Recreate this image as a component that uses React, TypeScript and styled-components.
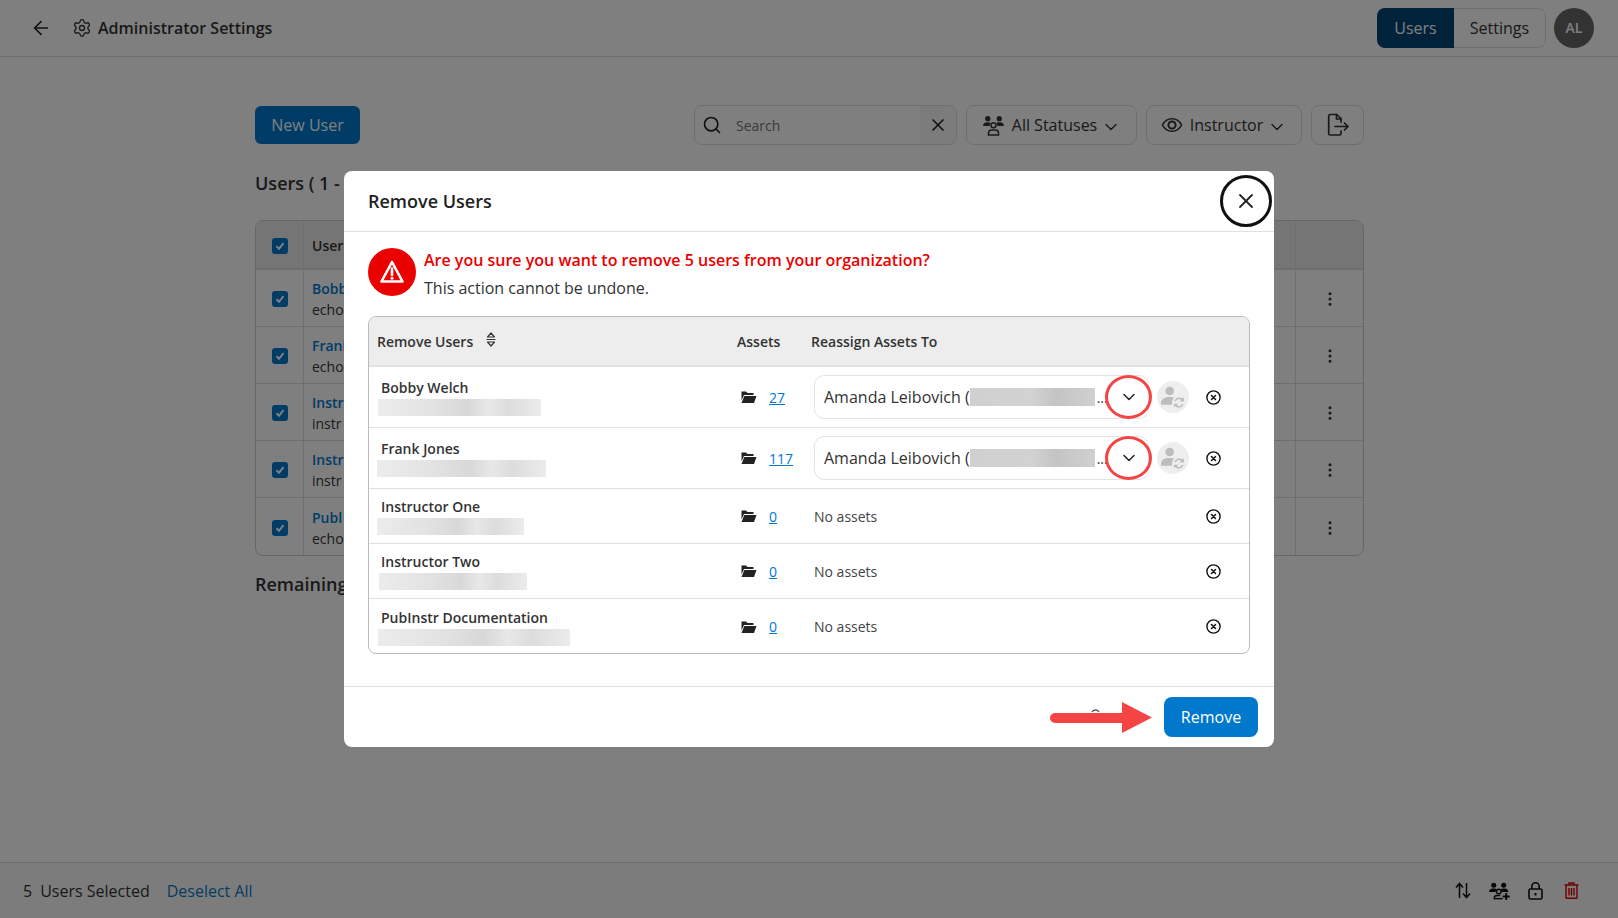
import React from 'react'
import styled, {createGlobalStyle} from 'styled-components'
import {ArrowLeft, ChevronDown, EllipsisVertical, Search, Settings, X} from 'lucide-react'

const GlobalStyle = createGlobalStyle`
  html, body {
    margin: 0;
    height: 100%;
    overflow: hidden;
    background: #fff;
    color: #333;
    font-family: "Open Sans", "Noto Sans", sans-serif;
  }
  * { box-sizing: border-box; }
`

const Page = styled.div`
  display: flex;
  flex-direction: column;
  height: 918px;
  width: 1618px;
`

const TopBar = styled.header`
  display: flex;
  align-items: center;
  height: 57px;
  padding: 0 24px 1px 30px;
  border-bottom: 1px solid #ddd;
`

const BackIcon = styled(ArrowLeft)`
  width: 22px;
  height: 22px;
  margin-right: 20px;
  color: #222;
  stroke-width: 1.7;
`

const PageTitle = styled.div`
  display: flex;
  align-items: center;
  gap: 6px;
  flex: 1;
  font-size: 16px;
  font-weight: 600;
  svg { width: 20px; height: 20px; stroke-width: 1.6; }
`

const Tabs = styled.div`
  display: flex;
  height: 40px;
  margin-right: 8px;
  border: 1px solid #ddd;
  border-radius: 8px;
`

const Tab = styled.div<{$active?: boolean}>`
  display: flex;
  align-items: center;
  justify-content: center;
  width: ${p => (p.$active ? '77px' : '91px')};
  margin: ${p => (p.$active ? '-1px 0 -1px -1px' : '0')};
  border-radius: ${p => (p.$active ? '8px 0 0 8px' : '0 8px 8px 0')};
  background: ${p => (p.$active ? '#004477' : 'transparent')};
  color: ${p => (p.$active ? '#fff' : '#333')};
  font-size: 16px;
`

const Avatar = styled.div`
  display: flex;
  align-items: center;
  justify-content: center;
  width: 40px;
  height: 40px;
  border-radius: 50%;
  background: #666;
  color: #fff;
  font-size: 14px;
  font-weight: 600;
`

const Main = styled.main`
  flex: 1;
  width: 1109px;
  margin-left: 255px;
  padding-top: 48px;
`

const Toolbar = styled.div`
  display: flex;
  align-items: center;
  gap: 9px;
  height: 40px;
`

const NewUserButton = styled.button`
  height: 38px;
  width: 105px;
  margin-right: auto;
  border: 0;
  border-radius: 6px;
  background: #0078cc;
  color: #fff;
  font: 16px "Open Sans", sans-serif;
`

const SearchBox = styled.div`
  display: flex;
  align-items: center;
  width: 263px;
  height: 40px;
  border: 1px solid #ddd;
  border-radius: 8px;
  overflow: hidden;
  color: #222;
`

const SearchIcon = styled.div`
  display: flex;
  align-items: center;
  justify-content: center;
  width: 33px;
  height: 100%;
  svg { width: 20px; height: 20px; }
`

const SearchField = styled.div`
  flex: 1;
  padding-left: 8px;
  font-size: 14px;
  color: #777;
`

const SearchClear = styled.div`
  display: flex;
  align-items: center;
  justify-content: center;
  width: 36px;
  height: 100%;
  background: #f8f8f8;
  svg { width: 20px; height: 20px; }
`

const FilterButton = styled.div<{$w: number}>`
  display: flex;
  align-items: center;
  justify-content: center;
  gap: 7px;
  width: ${p => p.$w}px;
  height: 40px;
  border: 1px solid #ddd;
  border-radius: 8px;
  font-size: 16px;
  color: #333;
  > svg:last-child:not(:first-child) { width: 20px; height: 20px; margin: 3px 0 0 -3px; stroke-width: 1.7; }
`

const SectionTitle = styled.h2<{$top: number}>`
  margin: ${p => p.$top}px 0 0;
  font-size: 18px;
  line-height: 24px;
  font-weight: 600;
  color: #333;
`

const UsersTable = styled.div`
  margin-top: 25px;
  border: 1px solid #ccc;
  border-radius: 8px;
  overflow: hidden;
`

const UsersHead = styled.div`
  display: grid;
  grid-template-columns: 48px 1fr 67px;
  height: 49px;
  background: #ebebeb;
  border-bottom: 2px solid #ddd;
  font-size: 14px;
  font-weight: 600;
`

const UsersRow = styled.div`
  display: grid;
  grid-template-columns: 48px 1fr 67px;
  height: 57px;
  border-bottom: 1px solid #ddd;
  font-size: 14px;
  &:last-child { border-bottom: 0; }
`

const UsersCell = styled.div<{$center?: boolean}>`
  display: flex;
  flex-direction: column;
  justify-content: center;
  align-items: ${p => (p.$center ? 'center' : 'flex-start')};
  padding-left: ${p => (p.$center ? '0' : '8px')};
  padding-top: 2px;
  border-right: 1px solid #ddd;
  line-height: 21px;
  &:last-child { border-right: 0; }
  svg { width: 18px; height: 18px; }
`

const UserLink = styled.div`
  color: #0078cc;
  font-weight: 600;
`

const CheckBox = styled.div`
  display: flex;
  align-items: center;
  justify-content: center;
  width: 16px;
  height: 16px;
  border-radius: 3px;
  background: #0078cc;
  svg { width: 10px; height: 10px; }
`

const BottomBar = styled.footer`
  display: flex;
  align-items: center;
  height: 56px;
  padding: 0 29px 0 23px;
  border-top: 1px solid #ddd;
  background: #f9f9f9;
  font-size: 16px;
`

const SelectedCount = styled.span`
  margin-right: 8px;
`

const DeselectLink = styled.span`
  margin-left: 17px;
  margin-right: auto;
  color: #0b78c4;
`

const BarIcon = styled.span<{$danger?: boolean}>`
  display: flex;
  justify-content: center;
  width: 36px;
  color: ${p => (p.$danger ? '#e00000' : '#111')};
`

const Overlay = styled.div`
  position: fixed;
  inset: 0;
  display: flex;
  align-items: center;
  justify-content: center;
  background: rgba(0, 0, 0, 0.5);
`

const Modal = styled.section`
  position: relative;
  width: 930px;
  height: 576px;
  background: #fff;
  border-radius: 8px;
`

const ModalHeader = styled.div`
  display: flex;
  align-items: center;
  height: 61px;
  padding: 0 24px 1px;
  border-bottom: 1px solid #e0e0e0;
  font-size: 18px;
  font-weight: 600;
  color: #222;
`

const CloseRing = styled.div`
  position: absolute;
  top: 4px;
  right: 2px;
  display: flex;
  align-items: center;
  justify-content: center;
  width: 52px;
  height: 52px;
  border: 3px solid #111;
  border-radius: 50%;
  background: #fff;
  color: #222;
  svg { width: 24px; height: 24px; stroke-width: 1.8; }
`

const ModalBody = styled.div`
  padding: 16px 24px 0;
`

const Alert = styled.div`
  display: flex;
  gap: 8px;
  height: 51px;
`

const AlertBadge = styled.div`
  display: flex;
  align-items: center;
  justify-content: center;
  flex: none;
  width: 48px;
  height: 48px;
  border-radius: 50%;
  background: #eb0000;
  svg { width: 26px; height: 26px; margin-top: -1px; }
`

const AlertText = styled.div`
  margin-top: -2px;
  font-size: 16px;
  line-height: 28px;
  color: #333;
`

const AlertTitle = styled.div`
  font-weight: 600;
  color: #eb0000;
`

const RemoveTable = styled.div`
  margin-top: 17px;
  height: 338px;
  border: 1px solid #bbb;
  border-radius: 8px;
  overflow: hidden;
`

const rowColumns = '368px 74px 1fr'

const RemoveHead = styled.div`
  display: grid;
  grid-template-columns: ${rowColumns};
  align-items: center;
  height: 50px;
  background: #ededed;
  border-bottom: 2px solid #e2e2e2;
  font-size: 14px;
  font-weight: 600;
  color: #333;
`

const HeadName = styled.div`
  display: flex;
  align-items: center;
  gap: 13px;
  padding-left: 8px;
  svg { width: 10px; height: 15px; margin-top: -3px; }
`

const RemoveRow = styled.div<{$tall?: boolean}>`
  display: grid;
  grid-template-columns: ${rowColumns};
  align-items: center;
  height: ${p => (p.$tall ? 61 : 55)}px;
  border-bottom: 1px solid #e0e0e0;
  &:last-child { border-bottom: 0; }
`

const NameCell = styled.div`
  display: flex;
  flex-direction: column;
  align-items: flex-start;
  padding-left: 12px;
  font-size: 14px;
  font-weight: 600;
  line-height: 19px;
  color: #333;
`

const Blur = styled.div<{$w: number; $x: number}>`
  width: ${p => p.$w}px;
  height: 17px;
  margin-top: 2px;
  margin-left: ${p => p.$x}px;
  background: linear-gradient(90deg, #ececec, #e2e2e2 35%, #d8d8d8 55%, #e8e8e8 68%, #dcdcdc 80%, #ececec);
`

const AssetCell = styled.div`
  display: flex;
  align-items: center;
  gap: 12px;
  padding-left: 3px;
  font-size: 14px;
`

const AssetLink = styled.a`
  color: #0078d0;
  text-decoration: underline;
`

const ReassignCell = styled.div`
  display: flex;
  align-items: center;
  padding: 0 28.5px 0 3px;
  font-size: 14px;
  color: #444;
`

const NoAssets = styled.div`
  flex: 1;
`

const AssetSelect = styled.div`
  position: relative;
  display: flex;
  align-items: center;
  width: 335px;
  height: 44px;
  padding-left: 9px;
  border: 1px solid #e2e2e2;
  border-radius: 10px;
  font-size: 16px;
  color: #333;
  white-space: nowrap;
`

const SelectBlur = styled.div`
  width: 125px;
  height: 18px;
  background: linear-gradient(90deg, #d0d0d0, #d2d2d2 50%, #c4c4c4 68%, #d0d0d0);
`

const Ellipsis = styled.span`
  margin-left: 2px;
  font-size: 14px;
`

const Chevron = styled(ChevronDown)`
  position: absolute;
  right: 9px;
  width: 20px;
  height: 20px;
  color: #222;
  stroke-width: 1.8;
`

const AnnotationRing = styled.div`
  position: absolute;
  top: -1px;
  right: -4px;
  width: 47px;
  height: 44px;
  border: 3px solid #f44444;
  border-radius: 50%;
`

const ReassignButton = styled.div`
  display: flex;
  align-items: center;
  justify-content: center;
  flex: none;
  width: 32px;
  height: 32px;
  margin-left: 8px;
  border-radius: 50%;
  background: #eee;
`

const RemoveIcon = styled.div`
  display: flex;
  margin-left: auto;
  color: #111;
`

const ModalFooter = styled.div`
  position: absolute;
  left: 0;
  right: 0;
  bottom: 0;
  display: flex;
  align-items: center;
  justify-content: flex-end;
  height: 61px;
  padding: 0 16px;
  border-top: 1px solid #e0e0e0;
`

const RemoveButton = styled.button`
  width: 94px;
  height: 40px;
  border: 0;
  border-radius: 8px;
  background: #0078cc;
  color: #fff;
  font: 16px "Open Sans", sans-serif;
`

const ArrowNote = styled.svg`
  position: absolute;
  left: 706px;
  top: 15px;
`

const GroupIcon = ({size = 23}: {size?: number}) => (
    <svg width={size} height={size} viewBox="0 0 22 22" fill="currentColor">
        <circle cx="5.500" cy="4.500" r="2.500"/>
        <circle cx="16.500" cy="4.500" r="2.500"/>
        <path d="M1 11.500c0-2 1.600-3.600 3.600-3.600h1.800c.8 0 1.500.3 2 .7-.7.7-1.100 1.800-1.100 2.900H1zM21 11.500c0-2-1.600-3.600-3.600-3.600h-1.800c-.8 0-1.500.3-2 .7.7.7 1.100 1.800 1.100 2.900H21z"/>
        <circle cx="11" cy="10.800" r="2.400" fill="none" stroke="currentColor" strokeWidth="1.400"/>
        <path d="M6.200 20v-1.600c0-1.800 1.400-3 3-3h3.600c1.600 0 3 1.200 3 3V20H6.200z" fill="none" stroke="currentColor" strokeWidth="1.400"/>
    </svg>
)

const GroupAddIcon = () => (
    <svg width="21" height="18" viewBox="0 0 20 17" fill="currentColor">
        <circle cx="4.500" cy="3" r="2.400"/>
        <circle cx="14" cy="3" r="2.400"/>
        <path d="M0 9.500c0-2 1.500-3.400 3.400-3.400h2c.7 0 1.400.3 1.900.7-.6.7-1 1.700-1 2.700H0zM18.500 9.500c0-2-1.500-3.400-3.400-3.400h-2c-.7 0-1.400.3-1.900.7.6.7 1 1.700 1 2.700h6.300z"/>
        <circle cx="9.300" cy="9" r="2.200" fill="none" stroke="currentColor" strokeWidth="1.400"/>
        <path d="M5 16.300v-1c0-1.500 1.200-2.600 2.700-2.600h3" fill="none" stroke="currentColor" strokeWidth="1.400"/>
        <path d="M5 15.800h8" stroke="currentColor" strokeWidth="1.400"/>
        <path d="M15.500 10.500h1.800v2.300h2.500v1.800h-2.500V17h-1.800v-2.400H13v-1.800h2.500z"/>
    </svg>
)

const EyeIcon = () => (
    <svg width="22" height="22" viewBox="0 0 22 22" fill="none" stroke="currentColor" strokeWidth="1.600">
        <path d="M1.500 11C3.500 6.800 7 4.800 11 4.800s7.500 2 9.500 6.200c-2 4.200-5.500 6.200-9.500 6.200S3.500 15.200 1.500 11z"/>
        <circle cx="11" cy="11" r="3.600" strokeWidth="2"/>
    </svg>
)

const ExportIcon = () => (
    <svg width="22" height="24" viewBox="0 0 22 24" fill="none" stroke="currentColor" strokeWidth="1.700" strokeLinejoin="round" strokeLinecap="round">
        <path d="M14 9V5.500L9.800 1.500H3.200C2.300 1.500 1.700 2.100 1.700 3v17.500c0 .9.600 1.500 1.500 1.500h9.300c.9 0 1.500-.6 1.500-1.500V18"/>
        <path d="M9.500 1.500V6h4.500M8 13.500h13M17.500 10l3.500 3.500-3.500 3.500"/>
    </svg>
)

const SortIcon = () => (
    <svg viewBox="0 0 10 15" fill="none" stroke="#333" strokeWidth="1.200" strokeLinejoin="round">
        <path d="M5 1 1.500 5h7z"/>
        <path d="M5 14 1.500 10h7z"/>
        <path d="M.5 7.500h9"/>
    </svg>
)

const WarningIcon = () => (
    <svg viewBox="0 0 26 26" fill="none">
        <path d="M13 3 2.500 22.500h21z" stroke="#fff" strokeWidth="2.600" strokeLinejoin="round"/>
        <path d="M13 9.500v6.500" stroke="#fff" strokeWidth="2.600" strokeLinecap="round"/>
        <circle cx="13" cy="19.200" r="1.500" fill="#fff"/>
    </svg>
)

const FolderOpenIcon = () => (
    <svg width="17" height="14" viewBox="0 0 16 14" fill="#222">
        <path d="M1 1.500h4.500L7 3h6v2H3.500L1 10.500z"/>
        <path d="M3.800 6H16l-2.500 7H1z"/>
    </svg>
)

const PersonSyncIcon = () => (
    <svg width="24" height="22" viewBox="0 0 22 20" fill="#bdbdbd">
        <circle cx="8" cy="4.500" r="4"/>
        <path d="M0 17v-1.500C0 12 3 10 7 10h2c1.200 0 2.300.2 3.200.6-1.300 1.200-2.200 3-2.200 4.900 0 .5.100 1 .2 1.500H0z"/>
        <path d="M16.500 10.500c-2 0-3.700 1.400-4.200 3.300h1.500c.4-1.100 1.500-1.900 2.700-1.900.8 0 1.500.3 2 .8l-1.400 1.400H21v-4l-1.200 1.200c-.8-.5-2-.8-3.300-.8zM11.800 15.500v4l1.200-1.200c.9.900 2.100 1.400 3.500 1.400 2 0 3.700-1.400 4.200-3.300h-1.500c-.4 1.100-1.500 1.900-2.700 1.900-.8 0-1.500-.3-2-.8l1.400-1.400h-4.100z"/>
    </svg>
)

const RemoveCircleIcon = () => (
    <svg width="15" height="15" viewBox="0 0 15 15" fill="none" stroke="currentColor">
        <circle cx="7.500" cy="7.500" r="6.600" strokeWidth="1.400"/>
        <path d="M5.500 5.500l4 4M9.500 5.500l-4 4" strokeWidth="1.500" strokeLinecap="round"/>
    </svg>
)

const SwapIcon = () => (
    <svg width="16" height="17" viewBox="0 0 16 17" fill="none" stroke="currentColor" strokeWidth="1.500">
        <path d="M4.500 16V2M1 5.500 4.500 1.500 8 5.500M11.500 1v14M8 11.500l3.500 4 3.500-4"/>
    </svg>
)

const LockIcon = () => (
    <svg width="15" height="18" viewBox="0 0 15 18" fill="none" stroke="currentColor" strokeWidth="1.600">
        <rect x="1" y="7" width="13" height="10" rx="1.500"/>
        <path d="M3.800 7V4.500a3.700 3.700 0 0 1 7.400 0V7"/>
        <path d="M7.500 11v2.500" strokeWidth="2"/>
    </svg>
)

const TrashIcon = () => (
    <svg width="15" height="17" viewBox="0 0 15 17" fill="none" stroke="currentColor" strokeWidth="1.400">
        <path d="M.5 3h14M5 3V1h5v2M2 3v12.500c0 .5.300.8.800.8h9.400c.5 0 .8-.3.800-.8V3"/>
        <path d="M5 6v7.500M7.500 6v7.500M10 6v7.500"/>
    </svg>
)

const CheckIcon = () => (
    <svg viewBox="0 0 10 10" fill="none" stroke="#fff" strokeWidth="2">
        <path d="M1.500 5.200 4 7.800l4.500-5.600"/>
    </svg>
)

// only what shows from under the dialog
const backRows = [
    ['Bobby', 'echo'],
    ['Frank', 'echo'],
    ['Instr', 'instr'],
    ['Instr', 'instr'],
    ['Publ', 'echo'],
]

const removeRows = [
    {name: 'Bobby Welch', count: 27, w: 163, x: -3},
    {name: 'Frank Jones', count: 117, w: 169, x: -4},
    {name: 'Instructor One', count: 0, w: 147, x: -4},
    {name: 'Instructor Two', count: 0, w: 148, x: -2},
    {name: 'PubInstr Documentation', count: 0, w: 192, x: -3},
]

function BackgroundPage() {
    return (
        <Page>
            <TopBar>
                <BackIcon/>
                <PageTitle><Settings/>Administrator Settings</PageTitle>
                <Tabs>
                    <Tab $active>Users</Tab>
                    <Tab>Settings</Tab>
                </Tabs>
                <Avatar>AL</Avatar>
            </TopBar>

            <Main>
                <Toolbar>
                    <NewUserButton>New User</NewUserButton>
                    <SearchBox>
                        <SearchIcon><Search/></SearchIcon>
                        <SearchField>Search</SearchField>
                        <SearchClear><X/></SearchClear>
                    </SearchBox>
                    <FilterButton $w={171}><GroupIcon/>All Statuses<ChevronDown/></FilterButton>
                    <FilterButton $w={156}><EyeIcon/>Instructor<ChevronDown/></FilterButton>
                    <FilterButton $w={53}><ExportIcon/></FilterButton>
                </Toolbar>

                <SectionTitle $top={26}>Users ( 1 -</SectionTitle>

                <UsersTable>
                    <UsersHead>
                        <UsersCell $center><CheckBox><CheckIcon/></CheckBox></UsersCell>
                        <UsersCell>User</UsersCell>
                        <UsersCell/>
                    </UsersHead>
                    {backRows.map(([name, sub], i) => (
                        <UsersRow key={i}>
                            <UsersCell $center><CheckBox><CheckIcon/></CheckBox></UsersCell>
                            <UsersCell>
                                <UserLink>{name}</UserLink>
                                <div>{sub}</div>
                            </UsersCell>
                            <UsersCell $center><EllipsisVertical/></UsersCell>
                        </UsersRow>
                    ))}
                </UsersTable>

                <SectionTitle $top={16}>Remaining</SectionTitle>
            </Main>

            <BottomBar>
                <SelectedCount>5</SelectedCount>
                Users Selected
                <DeselectLink>Deselect All</DeselectLink>
                <BarIcon><SwapIcon/></BarIcon>
                <BarIcon><GroupAddIcon/></BarIcon>
                <BarIcon><LockIcon/></BarIcon>
                <BarIcon $danger><TrashIcon/></BarIcon>
            </BottomBar>
        </Page>
    )
}

function RemoveUsersModal() {
    return (
        <Overlay>
            <Modal>
                <ModalHeader>Remove Users</ModalHeader>
                <CloseRing><X/></CloseRing>

                <ModalBody>
                    <Alert>
                        <AlertBadge><WarningIcon/></AlertBadge>
                        <AlertText>
                            <AlertTitle>Are you sure you want to remove 5 users from your organization?</AlertTitle>
                            This action cannot be undone.
                        </AlertText>
                    </Alert>

                    <RemoveTable>
                        <RemoveHead>
                            <HeadName>Remove Users <SortIcon/></HeadName>
                            <div>Assets</div>
                            <div>Reassign Assets To</div>
                        </RemoveHead>
                        {removeRows.map(row => (
                            <RemoveRow key={row.name} $tall={row.count > 0}>
                                <NameCell>
                                    {row.name}
                                    <Blur $w={row.w} $x={row.x}/>
                                </NameCell>
                                <AssetCell>
                                    <FolderOpenIcon/>
                                    <AssetLink>{row.count}</AssetLink>
                                </AssetCell>
                                <ReassignCell>
                                    {row.count > 0 ? (
                                        <>
                                            <AssetSelect>
                                                Amanda Leibovich (
                                                <SelectBlur/>
                                                <Ellipsis>...</Ellipsis>
                                                <Chevron/>
                                                <AnnotationRing/>
                                            </AssetSelect>
                                            <ReassignButton><PersonSyncIcon/></ReassignButton>
                                        </>
                                    ) : (
                                        <NoAssets>No assets</NoAssets>
                                    )}
                                    <RemoveIcon><RemoveCircleIcon/></RemoveIcon>
                                </ReassignCell>
                            </RemoveRow>
                        ))}
                    </RemoveTable>
                </ModalBody>

                <ModalFooter>
                    <ArrowNote width="102" height="32" viewBox="0 0 102 32">
                        <path d="M42 10c.8-1.600 2.200-2.200 3.500-2.200s2.500.6 3.500 2.200" fill="none" stroke="#444" strokeWidth="1.200"/>
                        <path d="M5 11h67V0l30 15.500L72 31V21H5a5 5 0 0 1 0-10z" fill="#f44444"/>
                    </ArrowNote>
                    <RemoveButton>Remove</RemoveButton>
                </ModalFooter>
            </Modal>
        </Overlay>
    )
}

export default function App() {
    return (
        <>
            <GlobalStyle/>
            <BackgroundPage/>
            <RemoveUsersModal/>
        </>
    )
}
